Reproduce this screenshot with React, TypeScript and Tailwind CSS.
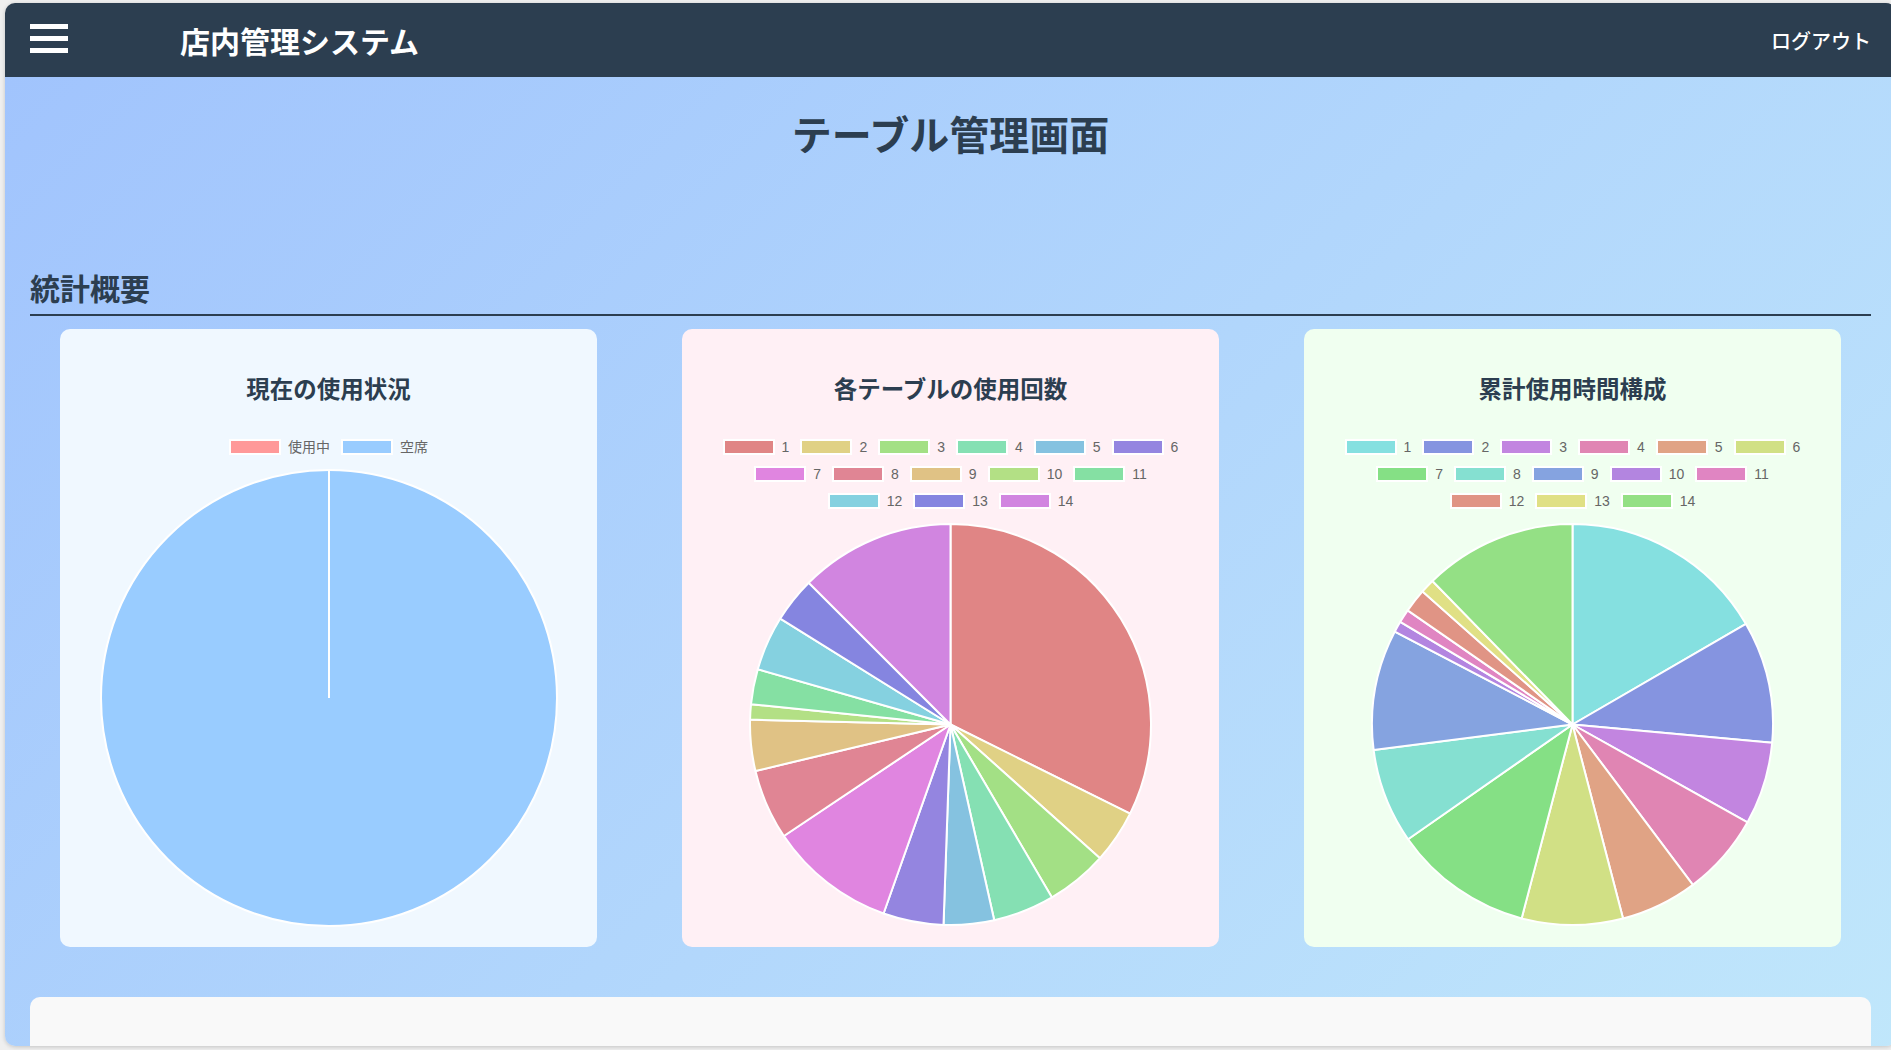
import React from "react";

const HEADING = "#2c3e50";

const countValues = [116.4, 15.4, 17.8, 17.8, 14.6, 17.5, 36.7, 20.4, 14.8, 4.4, 10.2, 15.9, 13.1, 45];
const timeValues = [59.9, 35.3, 24, 23.9, 22.3, 29.3, 40.4, 27.6, 34.9, 3.2, 3.9, 6.9, 4.1, 44.3];

const tables = Array.from({ length: 14 }, (_, i) => String(i + 1));
const countColors = tables.map((_, i) => `hsl(${(i * 50) % 360}, 60%, 70%)`);
const timeColors = tables.map((_, i) => `hsl(${(180 + i * 50) % 360}, 60%, 70%)`);

function Pie({ values, colors, size }: { values: number[]; colors: string[]; size: number }) {
  const total = values.reduce((a, b) => a + b, 0);
  const c = size / 2;
  const r = c - 1;
  let angle = -Math.PI / 2;

  return (
    <svg width={size} height={size} viewBox={`0 0 ${size} ${size}`}>
      {values.map((v, i) => {
        if (v <= 0) return null;
        const start = angle;
        const sweep = (v / total) * Math.PI * 2;
        angle += sweep;
        if (v === total) {
          return (
            <g key={i}>
              <circle cx={c} cy={c} r={r} fill={colors[i]} stroke="#fff" strokeWidth={2} />
              <line x1={c} y1={c} x2={c} y2={c - r} stroke="#fff" strokeWidth={2} />
            </g>
          );
        }
        const x0 = c + r * Math.cos(start);
        const y0 = c + r * Math.sin(start);
        const x1 = c + r * Math.cos(angle);
        const y1 = c + r * Math.sin(angle);
        const large = sweep > Math.PI ? 1 : 0;
        return (
          <path
            key={i}
            d={`M${c} ${c} L${x0} ${y0} A${r} ${r} 0 ${large} 1 ${x1} ${y1} Z`}
            fill={colors[i]}
            stroke="#fff"
            strokeWidth={2}
            strokeLinejoin="round"
          />
        );
      })}
    </svg>
  );
}

function Legend({ rows, colors }: { rows: string[][]; colors: Record<string, string> }) {
  return (
    <div className="mt-[38px] flex flex-col items-center gap-y-[11px]">
      {rows.map((row, ri) => (
        <div key={ri} className="flex items-center gap-x-[11px]">
          {row.map((label) => (
            <div key={label} className="flex items-center h-[16px]">
              <span
                className="block w-[52px] h-[16px] border-2 border-white"
                style={{ backgroundColor: colors[label] }}
              />
              <span className="ml-[7px] text-[14px] leading-[16px] text-[#666] font-['Liberation_Sans','Noto_Sans_CJK_JP',sans-serif]">
                {label}
              </span>
            </div>
          ))}
        </div>
      ))}
    </div>
  );
}

function ChartCard({
  title,
  bg,
  children,
}: {
  title: string;
  bg: string;
  children: React.ReactNode;
}) {
  return (
    <div className={`h-[618px] rounded-[10px] pt-[46px] flex flex-col items-center ${bg}`}>
      <h3 className="text-[23.5px] leading-[26px] font-bold text-[#2c3e50]">{title}</h3>
      {children}
    </div>
  );
}

const toMap = (labels: string[], colors: string[]) =>
  Object.fromEntries(labels.map((l, i) => [l, colors[i]]));

const tableRows = [tables.slice(0, 6), tables.slice(6, 11), tables.slice(11)];

export default function App() {
  return (
    <div className="h-screen w-full overflow-hidden bg-[#efefef] pl-[5px] pt-[3px] font-['Noto_Sans_CJK_JP','Noto_Sans',sans-serif]">
      <div className="w-[1891px] h-[1043px] overflow-hidden rounded-[10px] shadow-[0_1px_4px_rgba(0,0,0,0.18)] flex flex-col">
        <header className="h-[74px] shrink-0 bg-[#2c3e50] flex items-center px-[25px] text-white">
          <button className="flex flex-col gap-[7px] w-[38px] -mt-[3px]">
            <span className="block h-[5px] w-full bg-white" />
            <span className="block h-[5px] w-full bg-white" />
            <span className="block h-[5px] w-full bg-white" />
          </button>
          <h1 className="ml-[112px] text-[30px] leading-[36px] font-bold">店内管理システム</h1>
          <button className="ml-auto mt-[1px] text-[20px] leading-[24px] font-medium">ログアウト</button>
        </header>

        <main className="flex-1 px-[25px] bg-[linear-gradient(135deg,#a1c4fd_0%,#c2e9fb_100%)]">
          <h2 className="pt-[32px] text-center text-[40px] leading-[48px] font-bold" style={{ color: HEADING }}>
            テーブル管理画面
          </h2>

          <section className="mt-[114px]">
            <h2 className="text-[30px] leading-[32px] font-bold text-[#2c3e50] pb-[11px] border-b-2 border-[#2c3e50]">
              統計概要
            </h2>

            <div className="mt-[13px] px-[30px] grid grid-cols-3 gap-[85px]">
              <ChartCard title="現在の使用状況" bg="bg-[#f0f8ff]">
                <Legend rows={[["使用中", "空席"]]} colors={{ 使用中: "#ff9999", 空席: "#99ccff" }} />
                <div className="mt-[14px]">
                  <Pie values={[0, 100]} colors={["#ff9999", "#99ccff"]} size={458} />
                </div>
              </ChartCard>

              <ChartCard title="各テーブルの使用回数" bg="bg-[#fff0f5]">
                <Legend rows={tableRows} colors={toMap(tables, countColors)} />
                <div className="mt-[14px]">
                  <Pie values={countValues} colors={countColors} size={403} />
                </div>
              </ChartCard>

              <ChartCard title="累計使用時間構成" bg="bg-[#f0fff0]">
                <Legend rows={tableRows} colors={toMap(tables, timeColors)} />
                <div className="mt-[14px]">
                  <Pie values={timeValues} colors={timeColors} size={403} />
                </div>
              </ChartCard>
            </div>
          </section>

          <div className="mt-[50px] h-[240px] rounded-[10px] bg-[#f9f9f9]" />
        </main>
      </div>
    </div>
  );
}
